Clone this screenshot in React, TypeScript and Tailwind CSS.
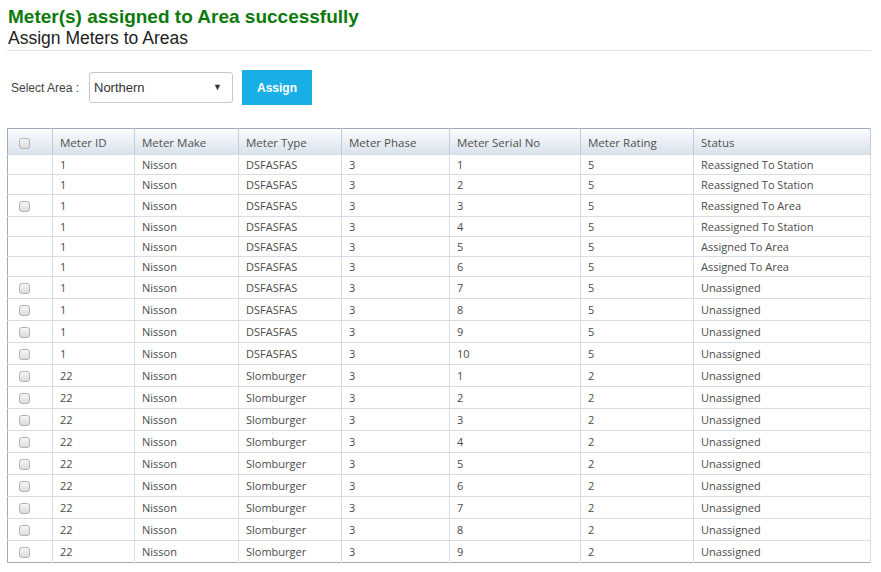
const rows: [string, string, string, string, string, string, string, boolean][] = [
  ["1", "Nisson", "DSFASFAS", "3", "1", "5", "Reassigned To Station", false],
  ["1", "Nisson", "DSFASFAS", "3", "2", "5", "Reassigned To Station", false],
  ["1", "Nisson", "DSFASFAS", "3", "3", "5", "Reassigned To Area", true],
  ["1", "Nisson", "DSFASFAS", "3", "4", "5", "Reassigned To Station", false],
  ["1", "Nisson", "DSFASFAS", "3", "5", "5", "Assigned To Area", false],
  ["1", "Nisson", "DSFASFAS", "3", "6", "5", "Assigned To Area", false],
  ["1", "Nisson", "DSFASFAS", "3", "7", "5", "Unassigned", true],
  ["1", "Nisson", "DSFASFAS", "3", "8", "5", "Unassigned", true],
  ["1", "Nisson", "DSFASFAS", "3", "9", "5", "Unassigned", true],
  ["1", "Nisson", "DSFASFAS", "3", "10", "5", "Unassigned", true],
  ["22", "Nisson", "Slomburger", "3", "1", "2", "Unassigned", true],
  ["22", "Nisson", "Slomburger", "3", "2", "2", "Unassigned", true],
  ["22", "Nisson", "Slomburger", "3", "3", "2", "Unassigned", true],
  ["22", "Nisson", "Slomburger", "3", "4", "2", "Unassigned", true],
  ["22", "Nisson", "Slomburger", "3", "5", "2", "Unassigned", true],
  ["22", "Nisson", "Slomburger", "3", "6", "2", "Unassigned", true],
  ["22", "Nisson", "Slomburger", "3", "7", "2", "Unassigned", true],
  ["22", "Nisson", "Slomburger", "3", "8", "2", "Unassigned", true],
  ["22", "Nisson", "Slomburger", "3", "9", "2", "Unassigned", true],
];

const headers = ["Meter ID", "Meter Make", "Meter Type", "Meter Phase", "Meter Serial No", "Meter Rating", "Status"];
const widths = ["w-[82px]", "w-[104px]", "w-[103px]", "w-[108px]", "w-[131px]", "w-[113px]", "w-[177px]"];

function Box() {
  return (
    <span className="inline-block w-[11px] h-[11px] rounded-[3px] border border-[#b4b4b4] bg-gradient-to-b from-[#f6f6f6] to-[#dcdcdc] align-middle" />
  );
}

export default function App() {
  return (
    <div className="w-[881px] h-[572px] bg-white font-['Liberation_Sans',Arial,sans-serif] overflow-hidden">
      <div className="pl-[8px] pt-[6px]">
        <h1 className="text-[19px] leading-[22px] font-bold text-[#0b7a0b]">Meter(s) assigned to Area successfully</h1>
        <h2 className="text-[17.5px] leading-[20px] text-[#222]">Assign Meters to Areas</h2>
      </div>
      <div className="ml-[7px] mr-[10px] mt-[2px] border-t border-[#e4e4e4]" />

      <div className="flex items-center pl-[11px] mt-[19px]">
        <span className="text-[12px] text-[#444] w-[78px]">Select Area :</span>
        <div className="flex items-center justify-between w-[144px] h-[31px] border border-[#c8c8c8] rounded-[3px] pl-[4px] pr-[10px] text-[13px] text-[#333]">
          <span>Northern</span>
          <span className="text-[9px] text-[#333]">▼</span>
        </div>
        <button className="ml-[9px] w-[70px] h-[35px] bg-[#1aaee6] text-white text-[12px] font-semibold">Assign</button>
      </div>

      <table className="mt-[23px] ml-[7px] w-[863px] border-collapse border border-[#9eabbd] font-['Open_Sans',sans-serif] text-[11px] text-[#4b4b4b] table-fixed">
        <thead>
          <tr className="h-[26px] bg-gradient-to-b from-[#fbfcfe] to-[#d8e1ec]">
            <th className="w-[45px] border-r border-[#c3ccd8] text-left pl-[11px] pt-[2px] font-normal">
              <Box />
            </th>
            {headers.map((h, i) => (
              <th key={h} className={`${widths[i]} border-r border-[#c3ccd8] text-left font-normal pl-[7px] pt-[2px] text-[#505050] text-[11.5px]`}>
                {h}
              </th>
            ))}
          </tr>
        </thead>
        <tbody>
          {rows.map((r, idx) => (
            <tr key={idx} className={`${r[7] ? "h-[22px]" : "h-[20px]"} border-t border-[#d7dde5]`}>
              <td className="border-r border-[#d7dde5] text-left pl-[11px] leading-none">{r[7] && <Box />}</td>
              {r.slice(0, 7).map((c, j) => (
                <td key={j} className="border-r border-[#d7dde5] pl-[7px] leading-none whitespace-nowrap">
                  {c as string}
                </td>
              ))}
            </tr>
          ))}
        </tbody>
      </table>
    </div>
  );
}
